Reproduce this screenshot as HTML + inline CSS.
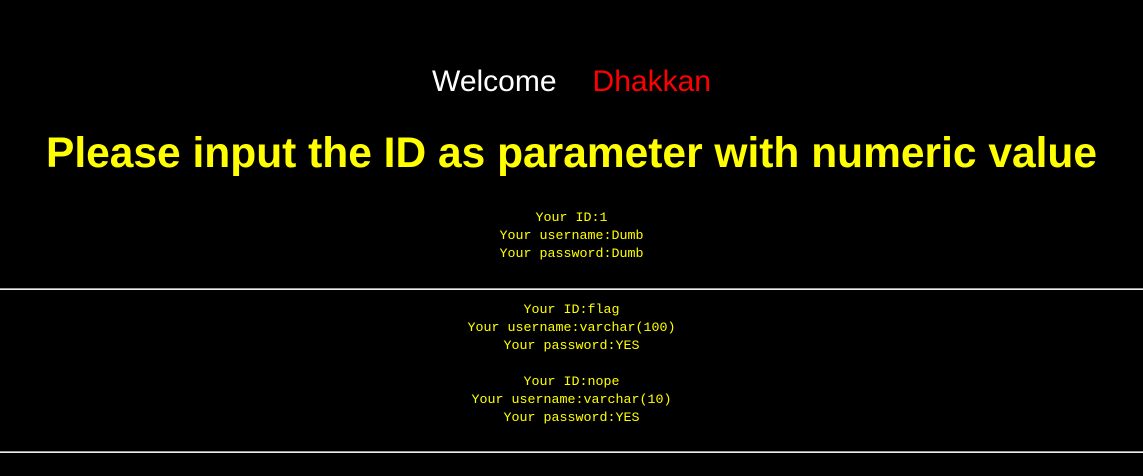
<!DOCTYPE html>
<html><head><meta charset="utf-8"><style>
body{margin:0;background:#000;width:1143px;height:476px;overflow:hidden;position:relative;font-family:"Liberation Sans",sans-serif}
.c{position:absolute;left:0;width:1143px;text-align:center;white-space:nowrap}
.w{top:63px;font-size:30px;color:#fff;line-height:38px}
.w span{color:#f00;margin-left:36px}
.t{top:129px;font-size:42.5px;font-weight:bold;color:#ff0;line-height:50px}
.m{font-family:"Liberation Mono",monospace;font-size:13.33px;color:#ff0;line-height:18px}
.hr{position:absolute;left:0;width:1143px;height:0;border-top:1px solid #9a9a9a;border-bottom:1px solid #eee}
</style></head><body>
<div class="c w">Welcome<span>Dhakkan</span></div>
<div class="c t">Please input the ID as parameter with numeric value</div>
<div class="c m" style="top:210px">Your ID:1<br>Your username:Dumb<br>Your password:Dumb</div>
<div class="hr" style="top:288px"></div>
<div class="c m" style="top:302px">Your ID:flag<br>Your username:varchar(100)<br>Your password:YES<br><br>Your ID:nope<br>Your username:varchar(10)<br>Your password:YES</div>
<div class="hr" style="top:451px"></div>
</body></html>
